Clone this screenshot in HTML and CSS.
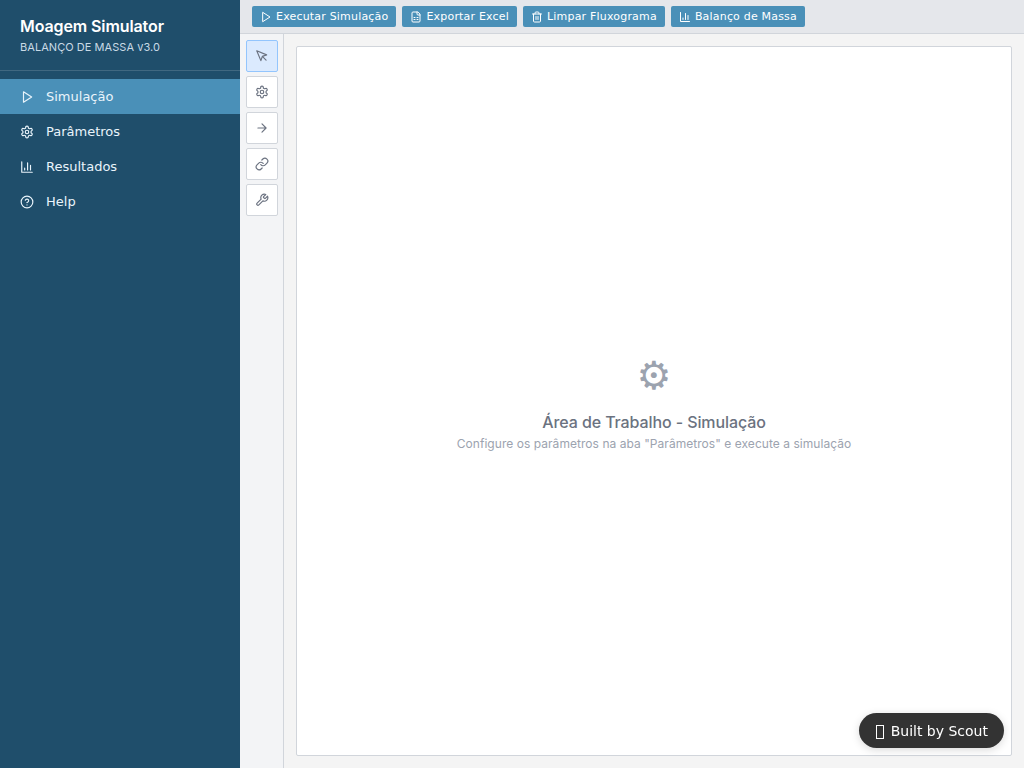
FILE: index.html
```html
<!DOCTYPE html>
<html lang="pt-BR">
<head>
<meta charset="utf-8">
<title>Moagem Simulator</title>
<link rel="stylesheet" href="styles.css">
</head>
<body>
<svg class="defs" width="0" height="0">
  <symbol id="play" viewBox="0 0 24 24"><path d="M6 3l14 9-14 9z"/></symbol>
  <symbol id="gear" viewBox="0 0 24 24"><path d="M12.22 2h-.44a2 2 0 0 0-2 2v.18a2 2 0 0 1-1 1.73l-.43.25a2 2 0 0 1-2 0l-.15-.08a2 2 0 0 0-2.73.73l-.22.38a2 2 0 0 0 .73 2.73l.15.1a2 2 0 0 1 1 1.72v.51a2 2 0 0 1-1 1.74l-.15.09a2 2 0 0 0-.73 2.73l.22.38a2 2 0 0 0 2.73.73l.15-.08a2 2 0 0 1 2 0l.43.25a2 2 0 0 1 1 1.73V20a2 2 0 0 0 2 2h.44a2 2 0 0 0 2-2v-.18a2 2 0 0 1 1-1.73l.43-.25a2 2 0 0 1 2 0l.15.08a2 2 0 0 0 2.73-.73l.22-.39a2 2 0 0 0-.73-2.73l-.15-.08a2 2 0 0 1-1-1.74v-.5a2 2 0 0 1 1-1.74l.15-.09a2 2 0 0 0 .73-2.73l-.22-.38a2 2 0 0 0-2.73-.73l-.15.08a2 2 0 0 1-2 0l-.43-.25a2 2 0 0 1-1-1.73V4a2 2 0 0 0-2-2z"/><circle cx="12" cy="12" r="3"/></symbol>
  <symbol id="chart" viewBox="0 0 24 24"><path d="M3 3v18h18M18 17V9M13 17V5M8 17v-3"/></symbol>
  <symbol id="help" viewBox="0 0 24 24"><circle cx="12" cy="12" r="10"/><path d="M9.09 9a3 3 0 0 1 5.83 1c0 2-3 3-3 3M12 17h.01"/></symbol>
  <symbol id="sheet" viewBox="0 0 24 24"><path d="M15 2H6a2 2 0 0 0-2 2v16a2 2 0 0 0 2 2h12a2 2 0 0 0 2-2V7zM14 2v4a2 2 0 0 0 2 2h4M8 13h2M14 13h2M8 17h2M14 17h2"/></symbol>
  <symbol id="trash" viewBox="0 0 24 24"><path d="M3 6h18M19 6v14a2 2 0 0 1-2 2H7a2 2 0 0 1-2-2V6M8 6V4a2 2 0 0 1 2-2h4a2 2 0 0 1 2 2v2M10 11v6M14 11v6"/></symbol>
  <symbol id="pointer" viewBox="0 0 24 24"><path d="M3 3l7.07 16.97 2.51-7.39 7.39-2.51zM13 13l6 6"/></symbol>
  <symbol id="arrow" viewBox="0 0 24 24"><path d="M5 12h14M12 5l7 7-7 7"/></symbol>
  <symbol id="link" viewBox="0 0 24 24"><path d="M10 13a5 5 0 0 0 7.54.54l3-3a5 5 0 0 0-7.07-7.07l-1.72 1.71M14 11a5 5 0 0 0-7.54-.54l-3 3a5 5 0 0 0 7.07 7.07l1.71-1.71"/></symbol>
  <symbol id="wrench" viewBox="0 0 24 24"><path d="M14.7 6.3a1 1 0 0 0 0 1.4l1.6 1.6a1 1 0 0 0 1.4 0l3.77-3.77a6 6 0 0 1-7.94 7.94l-6.91 6.91a2.12 2.12 0 0 1-3-3l6.91-6.91a6 6 0 0 1 7.94-7.94l-3.76 3.76z"/></symbol>
</svg>
<div class="app">
  <aside class="sidebar">
    <header class="brand">
      <h1 class="brand-title">Moagem Simulator</h1>
      <p class="brand-sub">BALANÇO DE MASSA v3.0</p>
    </header>
    <nav class="nav">
      <button class="nav-item active"><svg class="icon"><use href="#play"/></svg>Simulação</button>
      <button class="nav-item"><svg class="icon"><use href="#gear"/></svg>Parâmetros</button>
      <button class="nav-item"><svg class="icon"><use href="#chart"/></svg>Resultados</button>
      <button class="nav-item"><svg class="icon"><use href="#help"/></svg>Help</button>
    </nav>
  </aside>
  <main class="main">
    <div class="toolbar">
      <button class="action"><svg class="icon"><use href="#play"/></svg>Executar Simulação</button>
      <button class="action"><svg class="icon"><use href="#sheet"/></svg>Exportar Excel</button>
      <button class="action"><svg class="icon"><use href="#trash"/></svg>Limpar Fluxograma</button>
      <button class="action"><svg class="icon"><use href="#chart"/></svg>Balanço de Massa</button>
    </div>
    <div class="workspace">
      <div class="tools">
        <button class="tool selected"><svg class="icon"><use href="#pointer"/></svg></button>
        <button class="tool"><svg class="icon"><use href="#gear"/></svg></button>
        <button class="tool"><svg class="icon"><use href="#arrow"/></svg></button>
        <button class="tool"><svg class="icon"><use href="#link"/></svg></button>
        <button class="tool"><svg class="icon"><use href="#wrench"/></svg></button>
      </div>
      <section class="canvas">
        <div class="empty-icon">⚙</div>
        <div class="empty-title">Área de Trabalho - Simulação</div>
        <div class="empty-text">Configure os parâmetros na aba "Parâmetros" e execute a simulação</div>
      </section>
    </div>
  </main>
</div>
<div class="badge"><span class="badge-mark"></span>Built by Scout</div>
</body>
</html>
```
FILE: styles.css
```css
* { box-sizing: border-box; margin: 0; padding: 0; }
body { font-family: Inter, sans-serif; background: #f4f4f4; overflow: hidden; }
button { font-family: "DejaVu Sans", sans-serif; border: 0; }
.defs { position: absolute; }
.icon { width: 14px; height: 14px; flex: none; fill: none; stroke: currentColor; stroke-width: 2; stroke-linecap: round; stroke-linejoin: round; }
.app { display: flex; height: 100vh; }
.sidebar { width: 240px; flex: none; background: #1f4e6b; color: #fff; }
.brand { height: 71px; padding: 16px 20px; border-bottom: 1px solid rgba(255, 255, 255, .15); }
.brand-title { font-size: 16px; line-height: 20px; font-weight: 600; letter-spacing: -.1px; }
.brand-sub { margin-top: 4px; font-size: 11px; line-height: 14px; letter-spacing: .05px; color: #c9dae6; }
.nav { padding-top: 8px; }
.nav-item { display: flex; align-items: center; gap: 12px; width: 100%; height: 35px; padding: 0 20px; background: none; color: #e9f4fb; font-size: 13px; }
.nav-item.active { background: #4a90b8; }
.main { flex: 1; display: flex; flex-direction: column; min-width: 0; }
.toolbar { display: flex; gap: 6px; height: 34px; padding: 6px 12px; background: #e5e7eb; border-bottom: 1px solid #d1d5db; }
.action { display: flex; align-items: center; gap: 4px; height: 21px; padding: 0 8px; border-radius: 2px; background: #4a90b8; color: #fff; font-size: 11px; letter-spacing: .19px; white-space: nowrap; }
.action .icon { width: 12px; height: 12px; }
.workspace { flex: 1; display: flex; min-height: 0; }
.tools { width: 44px; flex: none; display: flex; flex-direction: column; gap: 4px; padding: 6px; background: #f3f4f6; border-right: 1px solid #d1d5db; }
.tool { display: flex; align-items: center; justify-content: center; width: 32px; height: 32px; border: 1px solid #d1d5db; border-radius: 2px; background: #fff; color: #6b7280; }
.tool.selected { background: #dbeafe; border-color: #93c5fd; }
.canvas { flex: 1; margin: 12px; padding-bottom: 3px; display: flex; flex-direction: column; align-items: center; justify-content: center; background: #fff; border: 1px solid #d1d5db; border-radius: 2px; text-align: center; }
.empty-icon { height: 60px; font: 39px/60px "DejaVu Sans", sans-serif; color: #9ca3af; }
.empty-title { margin-top: 4px; font-size: 16px; line-height: 24px; font-weight: 500; letter-spacing: -.1px; color: #6b7280; }
.empty-text { font-size: 12px; line-height: 19px; letter-spacing: .045px; color: #9ca3af; }
.badge { position: fixed; right: 20px; bottom: 20px; display: flex; align-items: center; gap: 7px; height: 35px; padding: 0 16px 0 17px; border-radius: 18px; background: #333; color: #fff; font: 14px "DejaVu Sans", sans-serif; box-shadow: 0 2px 8px rgba(0, 0, 0, .15); }
.badge-mark { width: 8px; height: 14px; border: 1px solid #fff; margin-top: 2px; }
```
